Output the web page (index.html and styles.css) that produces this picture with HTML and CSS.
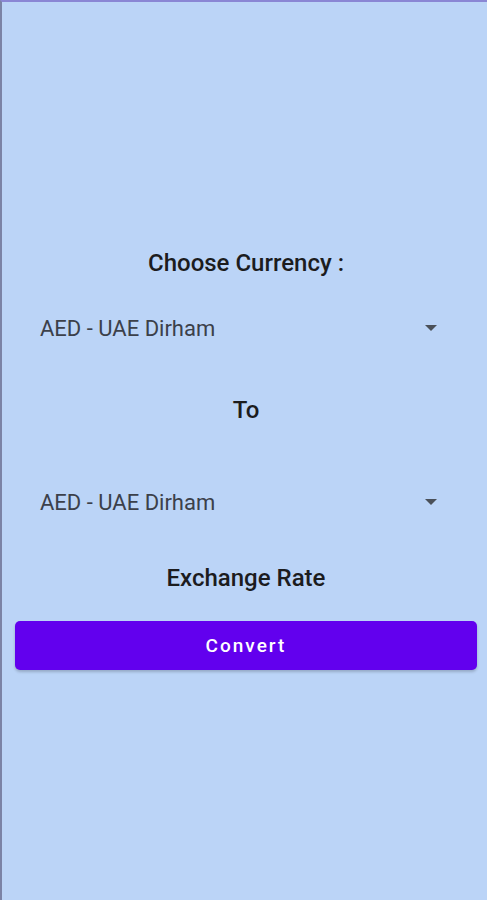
FILE: index.html
```html
<!DOCTYPE html>
<html lang="en">
<head>
  <meta charset="UTF-8">
  <title>Currency Converter</title>
<link rel="stylesheet" href="styles.css">
</head>
<body>
  <div class="screen">
    <h2 class="label">Choose Currency :</h2>
    <div class="spinner">
      <span>AED - UAE Dirham</span>
      <i class="arrow"></i>
    </div>
    <h2 class="label to">To</h2>
    <div class="spinner second">
      <span>AED - UAE Dirham</span>
      <i class="arrow"></i>
    </div>
    <h2 class="label rate">Exchange Rate</h2>
    <button class="convert">Convert</button>
  </div>
</body>
</html>
```
FILE: styles.css
```css
html, body {
  margin: 0;
  padding: 0;
  height: 100%;
}

body {
  box-sizing: border-box;
  background: #bbd4f7;
  border-top: 2px solid #8a86d4;
  border-left: 2px solid #7b83a6;
  font-family: Roboto, 'Liberation Sans', sans-serif;
}

.screen {
  display: flex;
  flex-direction: column;
  padding: 247px 10px 0 13px;
}

.label {
  margin: 0;
  text-align: center;
  font-size: 24px;
  line-height: 28px;
  font-weight: 500;
  color: #1c1c1e;
}

.spinner {
  display: flex;
  align-items: center;
  justify-content: space-between;
  height: 48px;
  margin-top: 27px;
  padding: 0 40px 0 25px;
  font-size: 22px;
  color: #3b404a;
}

.arrow {
  width: 0;
  height: 0;
  border-left: 6px solid transparent;
  border-right: 6px solid transparent;
  border-top: 6px solid #4a5059;
}

.to {
  margin-top: 44px;
}

.spinner.second {
  margin-top: 54px;
}

.rate {
  margin-top: 38px;
}

.convert {
  margin-top: 29px;
  height: 49px;
  border: none;
  border-radius: 5px;
  background: #6200ee;
  color: #fff;
  font-family: Roboto, 'Liberation Sans', sans-serif;
  font-size: 19px;
  font-weight: 500;
  letter-spacing: 2px;
  box-shadow: 0 2px 3px rgba(0, 0, 0, 0.2);
}
```
